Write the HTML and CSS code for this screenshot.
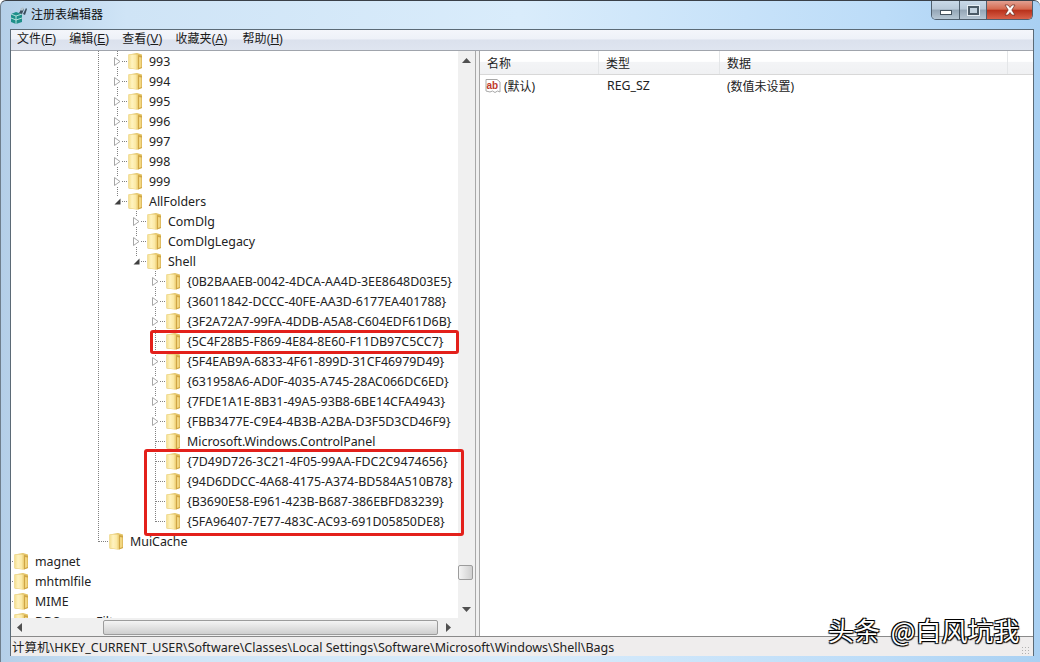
FILE: index.html
```html
<!DOCTYPE html>
<html lang="zh">
<head>
<meta charset="utf-8">
<title>注册表编辑器</title>
<link rel="stylesheet" href="styles.css">
</head>
<body>
<svg class="defs" width="0" height="0" aria-hidden="true">
  <defs>
    <linearGradient id="fg" x1="0" y1="0" x2="1" y2="0">
      <stop offset="0" stop-color="#f3dd8c"/><stop offset=".35" stop-color="#fff3c0"/><stop offset=".7" stop-color="#fbe9a6"/><stop offset="1" stop-color="#e6c566"/>
    </linearGradient>
    <symbol id="folder" viewBox="0 0 15 18">
      <path d="M.500 2.500 9 1l5 1.500v13.500l-5 1.500-8.500-1z" fill="#e3c468"/>
      <path d="M.500 2.500h9.500l.5 15-10-1.500z" fill="url(#fg)"/>
      <path d="M10 3l4 1v12l-4 1.500z" fill="#cfa544"/>
      <path d="M11 5l2.500.5v9.500l-2.500 1z" fill="#f2d680"/>
    </symbol>
    <symbol id="closed" viewBox="0 0 9 9">
      <path d="M1.500 .5 7 4.500 1.500 8.500z" fill="#fff" stroke="#a6a6a6"/>
    </symbol>
    <symbol id="open" viewBox="0 0 9 9">
      <path d="M7.500 1.500v6h-6z" fill="#404040"/>
    </symbol>
  </defs>
</svg>
<div class="window">
  <header class="titlebar">
    <svg class="app-icon" width="18" height="18" viewBox="0 0 18 18">
      <path d="M1 8l5-2 6 2v8l-6 2-5-2z" fill="#1f8f8a"/>
      <path d="M1 8l5 2v8M6 10l6-2M1 12l5 2 6-2" fill="none" stroke="#d6f2ee" stroke-width=".8"/>
      <path d="M9 7l3-5 2 1-2 5zM13 8l3-6 1 1-2 6z" fill="#3b4d5c"/>
      <path d="M10 3l3-2 1 2-2 2z" fill="#b7c7d2"/>
    </svg>
    <span class="title">注册表编辑器</span>
    <div class="caption">
      <div class="cap-btn cap-min"><i class="glyph-min"></i></div>
      <div class="cap-btn cap-max"><i class="glyph-max"></i></div>
      <div class="cap-btn cap-close"><svg width="14" height="12" viewBox="0 0 14 12"><path d="M2 1h3l2 2.500L9 1h3L8.800 6 12 11H9L7 8.500 5 11H2l3.200-5z" fill="#fff" stroke="#6b2b20" stroke-width=".7"/></svg></div>
    </div>
  </header>
  <div class="body">
    <nav class="menubar">
      <span>文件(<u>F</u>)</span><span>编辑(<u>E</u>)</span><span>查看(<u>V</u>)</span><span>收藏夹(<u>A</u>)</span><span>帮助(<u>H</u>)</span>
    </nav>
    <div class="panes">
      <section class="left">
        <div class="left-top">
          <div class="viewport">
            <div class="tree">
              <div class="row"><i class="s"></i><i class="s"></i><i class="s"></i><i class="s"></i><i class="s"></i><i class="s v"></i><i class="s t"><svg class="tri"><use href="#closed"/></svg></i><svg class="fld"><use href="#folder"/></svg><span class="lbl">993</span></div>
              <div class="row"><i class="s"></i><i class="s"></i><i class="s"></i><i class="s"></i><i class="s"></i><i class="s v"></i><i class="s t"><svg class="tri"><use href="#closed"/></svg></i><svg class="fld"><use href="#folder"/></svg><span class="lbl">994</span></div>
              <div class="row"><i class="s"></i><i class="s"></i><i class="s"></i><i class="s"></i><i class="s"></i><i class="s v"></i><i class="s t"><svg class="tri"><use href="#closed"/></svg></i><svg class="fld"><use href="#folder"/></svg><span class="lbl">995</span></div>
              <div class="row"><i class="s"></i><i class="s"></i><i class="s"></i><i class="s"></i><i class="s"></i><i class="s v"></i><i class="s t"><svg class="tri"><use href="#closed"/></svg></i><svg class="fld"><use href="#folder"/></svg><span class="lbl">996</span></div>
              <div class="row"><i class="s"></i><i class="s"></i><i class="s"></i><i class="s"></i><i class="s"></i><i class="s v"></i><i class="s t"><svg class="tri"><use href="#closed"/></svg></i><svg class="fld"><use href="#folder"/></svg><span class="lbl">997</span></div>
              <div class="row"><i class="s"></i><i class="s"></i><i class="s"></i><i class="s"></i><i class="s"></i><i class="s v"></i><i class="s t"><svg class="tri"><use href="#closed"/></svg></i><svg class="fld"><use href="#folder"/></svg><span class="lbl">998</span></div>
              <div class="row"><i class="s"></i><i class="s"></i><i class="s"></i><i class="s"></i><i class="s"></i><i class="s v"></i><i class="s t"><svg class="tri"><use href="#closed"/></svg></i><svg class="fld"><use href="#folder"/></svg><span class="lbl">999</span></div>
              <div class="row"><i class="s"></i><i class="s"></i><i class="s"></i><i class="s"></i><i class="s"></i><i class="s v"></i><i class="s c"><svg class="tri"><use href="#open"/></svg></i><svg class="fld"><use href="#folder"/></svg><span class="lbl">AllFolders</span></div>
              <div class="row"><i class="s"></i><i class="s"></i><i class="s"></i><i class="s"></i><i class="s"></i><i class="s v"></i><i class="s"></i><i class="s t"><svg class="tri"><use href="#closed"/></svg></i><svg class="fld"><use href="#folder"/></svg><span class="lbl">ComDlg</span></div>
              <div class="row"><i class="s"></i><i class="s"></i><i class="s"></i><i class="s"></i><i class="s"></i><i class="s v"></i><i class="s"></i><i class="s t"><svg class="tri"><use href="#closed"/></svg></i><svg class="fld"><use href="#folder"/></svg><span class="lbl">ComDlgLegacy</span></div>
              <div class="row"><i class="s"></i><i class="s"></i><i class="s"></i><i class="s"></i><i class="s"></i><i class="s v"></i><i class="s"></i><i class="s c"><svg class="tri"><use href="#open"/></svg></i><svg class="fld"><use href="#folder"/></svg><span class="lbl">Shell</span></div>
              <div class="row"><i class="s"></i><i class="s"></i><i class="s"></i><i class="s"></i><i class="s"></i><i class="s v"></i><i class="s"></i><i class="s"></i><i class="s t"><svg class="tri"><use href="#closed"/></svg></i><svg class="fld"><use href="#folder"/></svg><span class="lbl">{0B2BAAEB-0042-4DCA-AA4D-3EE8648D03E5}</span></div>
              <div class="row"><i class="s"></i><i class="s"></i><i class="s"></i><i class="s"></i><i class="s"></i><i class="s v"></i><i class="s"></i><i class="s"></i><i class="s t"><svg class="tri"><use href="#closed"/></svg></i><svg class="fld"><use href="#folder"/></svg><span class="lbl">{36011842-DCCC-40FE-AA3D-6177EA401788}</span></div>
              <div class="row"><i class="s"></i><i class="s"></i><i class="s"></i><i class="s"></i><i class="s"></i><i class="s v"></i><i class="s"></i><i class="s"></i><i class="s t"><svg class="tri"><use href="#closed"/></svg></i><svg class="fld"><use href="#folder"/></svg><span class="lbl">{3F2A72A7-99FA-4DDB-A5A8-C604EDF61D6B}</span></div>
              <div class="row"><i class="s"></i><i class="s"></i><i class="s"></i><i class="s"></i><i class="s"></i><i class="s v"></i><i class="s"></i><i class="s"></i><i class="s t"></i><svg class="fld"><use href="#folder"/></svg><span class="lbl">{5C4F28B5-F869-4E84-8E60-F11DB97C5CC7}</span></div>
              <div class="row"><i class="s"></i><i class="s"></i><i class="s"></i><i class="s"></i><i class="s"></i><i class="s v"></i><i class="s"></i><i class="s"></i><i class="s t"><svg class="tri"><use href="#closed"/></svg></i><svg class="fld"><use href="#folder"/></svg><span class="lbl">{5F4EAB9A-6833-4F61-899D-31CF46979D49}</span></div>
              <div class="row"><i class="s"></i><i class="s"></i><i class="s"></i><i class="s"></i><i class="s"></i><i class="s v"></i><i class="s"></i><i class="s"></i><i class="s t"><svg class="tri"><use href="#closed"/></svg></i><svg class="fld"><use href="#folder"/></svg><span class="lbl">{631958A6-AD0F-4035-A745-28AC066DC6ED}</span></div>
              <div class="row"><i class="s"></i><i class="s"></i><i class="s"></i><i class="s"></i><i class="s"></i><i class="s v"></i><i class="s"></i><i class="s"></i><i class="s t"><svg class="tri"><use href="#closed"/></svg></i><svg class="fld"><use href="#folder"/></svg><span class="lbl">{7FDE1A1E-8B31-49A5-93B8-6BE14CFA4943}</span></div>
              <div class="row"><i class="s"></i><i class="s"></i><i class="s"></i><i class="s"></i><i class="s"></i><i class="s v"></i><i class="s"></i><i class="s"></i><i class="s t"><svg class="tri"><use href="#closed"/></svg></i><svg class="fld"><use href="#folder"/></svg><span class="lbl">{FBB3477E-C9E4-4B3B-A2BA-D3F5D3CD46F9}</span></div>
              <div class="row"><i class="s"></i><i class="s"></i><i class="s"></i><i class="s"></i><i class="s"></i><i class="s v"></i><i class="s"></i><i class="s"></i><i class="s t"></i><svg class="fld"><use href="#folder"/></svg><span class="lbl">Microsoft.Windows.ControlPanel</span></div>
              <div class="row"><i class="s"></i><i class="s"></i><i class="s"></i><i class="s"></i><i class="s"></i><i class="s v"></i><i class="s"></i><i class="s"></i><i class="s t"></i><svg class="fld"><use href="#folder"/></svg><span class="lbl">{7D49D726-3C21-4F05-99AA-FDC2C9474656}</span></div>
              <div class="row"><i class="s"></i><i class="s"></i><i class="s"></i><i class="s"></i><i class="s"></i><i class="s v"></i><i class="s"></i><i class="s"></i><i class="s t"></i><svg class="fld"><use href="#folder"/></svg><span class="lbl">{94D6DDCC-4A68-4175-A374-BD584A510B78}</span></div>
              <div class="row"><i class="s"></i><i class="s"></i><i class="s"></i><i class="s"></i><i class="s"></i><i class="s v"></i><i class="s"></i><i class="s"></i><i class="s t"></i><svg class="fld"><use href="#folder"/></svg><span class="lbl">{B3690E58-E961-423B-B687-386EBFD83239}</span></div>
              <div class="row"><i class="s"></i><i class="s"></i><i class="s"></i><i class="s"></i><i class="s"></i><i class="s v"></i><i class="s"></i><i class="s"></i><i class="s c"></i><svg class="fld"><use href="#folder"/></svg><span class="lbl">{5FA96407-7E77-483C-AC93-691D05850DE8}</span></div>
              <div class="row"><i class="s"></i><i class="s"></i><i class="s"></i><i class="s"></i><i class="s"></i><i class="s c"></i><svg class="fld"><use href="#folder"/></svg><span class="lbl">MuiCache</span></div>
              <div class="row"><i class="s h"></i><svg class="fld"><use href="#folder"/></svg><span class="lbl">magnet</span></div>
              <div class="row"><i class="s h"></i><svg class="fld"><use href="#folder"/></svg><span class="lbl">mhtmlfile</span></div>
              <div class="row"><i class="s h"></i><svg class="fld"><use href="#folder"/></svg><span class="lbl">MIME</span></div>
              <div class="row"><i class="s h"></i><svg class="fld"><use href="#folder"/></svg><span class="lbl">DDSource Filter</span></div>
            </div>
          </div>
          <div class="vscroll">
            <svg class="arrow" width="9" height="5" viewBox="0 0 9 5"><path d="M4.500 0 9 5H0z" fill="#505050"/></svg>
            <div class="vtrack"><div class="vthumb"></div></div>
            <svg class="arrow" width="9" height="5" viewBox="0 0 9 5"><path d="M4.500 5 9 0H0z" fill="#505050"/></svg>
          </div>
        </div>
        <div class="hscroll">
          <svg width="5" height="9" viewBox="0 0 5 9"><path d="M0 4.500 5 0v9z" fill="#505050"/></svg>
          <div class="hthumb"></div>
          <svg width="5" height="9" viewBox="0 0 5 9"><path d="M5 4.500 0 0v9z" fill="#505050"/></svg>
        </div>
        <div class="mark mark-one"></div>
        <div class="mark mark-two"></div>
      </section>
      <section class="right">
        <div class="list-head">
          <span class="col col-a">名称</span><span class="col col-b">类型</span><span class="col col-c">数据</span><span class="col col-d"></span>
        </div>
        <div class="list-row">
          <span class="cell-a">
            <svg class="ab" width="16" height="16" viewBox="0 0 16 16"><path d="M1 1.500h11l3 2.500v10l-2.500-1-2.500 1.500-2.500-1.500-2.500 1L1 13z" fill="#fff" stroke="#a8a8a8"/><text x="1.500" y="10.500" class="ab-text">ab</text></svg>
            (默认)
          </span>
          <span class="cell-b">REG_SZ</span>
          <span class="cell-c">(数值未设置)</span>
        </div>
      </section>
    </div>
    <footer class="status"><span>计算机\HKEY_CURRENT_USER\Software\Classes\Local Settings\Software\Microsoft\Windows\Shell\Bags</span><i class="grip"></i></footer>
  </div>
  <div class="watermark">头条 @白风坑我</div>
</div>
</body>
</html>
```
FILE: styles.css
```css
* { box-sizing: border-box; }
html, body { margin: 0; padding: 0; }
body { width: 1040px; height: 662px; overflow: hidden; font-family: "Noto Sans", "Noto Sans CJK SC", sans-serif; }
.defs { display: block; height: 0; }
.window {
  position: relative;
  width: 1040px; height: 662px;
  padding: 0 6px 6px 9px;
  display: flex; flex-direction: column;
  background: linear-gradient(90deg, #b4cfe8 0, #cfe4f6 12%, #d9ecfb 50%, #bcdcf8 85%, #a9d0f2 100%);
  border-top: 1px solid #3a4048;
  border-left: 1px solid #6f7f8c;
  border-radius: 6px 6px 0 0;
}
.titlebar { height: 28px; flex: none; display: flex; align-items: flex-start; margin-left: -1px; margin-right: -5px; padding-right: 6px; }
.app-icon { margin: 5px 0 0 1px; flex: none; }
.title { margin: 3px 0 0 3px; font-family: "Noto Sans CJK SC", sans-serif; font-size: 12px; line-height: 20px; color: #101010; }
.caption { margin-left: auto; display: flex; height: 19px; border: 1px solid #4f5f6e; border-top: 0; border-radius: 0 0 5px 5px; overflow: hidden; }
.cap-btn { display: flex; align-items: center; justify-content: center; border-right: 1px solid #4f5f6e; }
.cap-btn:last-child { border-right: 0; }
.cap-min { width: 28px; background: linear-gradient(#c9d9e8 0, #b8c9d9 45%, #94a6b6 50%, #b6c6d4 100%); }
.cap-max { width: 27px; background: linear-gradient(#c9d9e8 0, #b8c9d9 45%, #94a6b6 50%, #b6c6d4 100%); }
.cap-close { width: 45px; background: linear-gradient(#e2a091 0, #d56a50 45%, #b9321c 52%, #d9614a 100%); }
.glyph-min { display: block; width: 12px; height: 5px; margin-top: 4px; background: #fff; border: 1px solid #44525e; }
.glyph-max { display: block; width: 11px; height: 9px; background: #c3d2df; border: 2px solid #4b5a66; outline: 1px solid #e6eef5; }
.body { flex: 1; min-height: 0; display: flex; flex-direction: column; border: 1px solid #5b6a76; border-bottom: 0; background: #f0f0f0; }
.menubar {
  height: 21px; flex: none; display: flex; gap: 13px; padding-left: 6px;
  font-family: "Liberation Sans", "Noto Sans CJK SC", sans-serif;
  font-size: 12px; line-height: 19px; color: #1a1a1a;
  background: linear-gradient(#f4f6fb 0, #eef1f8 45%, #dbe1ed 50%, #dfe5f0 100%);
  border-bottom: 1px solid #a0a4ac;
}
.menubar span { white-space: nowrap; }
.menubar span:last-child { margin-left: 2px; }
.panes { position: relative; flex: 1; min-height: 0; display: flex; gap: 3px; background: #f0f0f0; }
.left { position: relative; width: 465px; flex: none; display: flex; flex-direction: column; background: #fff; border-right: 1px solid #a8a8a8; }
.left-top { flex: 1; min-height: 0; display: flex; }
.viewport { flex: 1; min-width: 0; overflow: hidden; background: #fff; }
.tree { margin-left: -16px; }
.row { display: flex; align-items: center; height: 20px; white-space: nowrap; }
.s { position: relative; display: block; flex: none; width: 19px; height: 20px; }
.v { background: repeating-linear-gradient(#808080 0 1px, transparent 1px 2px) 8px 0 / 1px 100% no-repeat; }
.t {
  background:
    repeating-linear-gradient(#808080 0 1px, transparent 1px 2px) 8px 0 / 1px 100% no-repeat,
    repeating-linear-gradient(90deg, #808080 0 1px, transparent 1px 2px) 9px 10px / 10px 1px no-repeat;
}
.c {
  background:
    repeating-linear-gradient(#808080 0 1px, transparent 1px 2px) 8px 0 / 1px 11px no-repeat,
    repeating-linear-gradient(90deg, #808080 0 1px, transparent 1px 2px) 9px 10px / 10px 1px no-repeat;
}
.h { background: repeating-linear-gradient(90deg, #808080 0 1px, transparent 1px 2px) 9px 10px / 10px 1px no-repeat; }
.tri { position: absolute; left: 4px; top: 6px; width: 9px; height: 9px; background: #fff; }
.fld { flex: none; width: 15px; height: 18px; }
.lbl { margin-left: 6px; font-family: "Noto Sans", "Noto Sans CJK SC", sans-serif; font-size: 12.4px; color: #222; }
.mark { position: absolute; border: 3px solid #e3201b; border-radius: 3px; pointer-events: none; }
.mark-one { left: 139px; top: 279px; width: 309px; height: 24px; }
.mark-two { left: 133px; top: 398px; width: 320px; height: 87px; }
.vscroll { width: 17px; flex: none; display: flex; flex-direction: column; align-items: center; background: #f0f0f0; padding: 7px 0 6px; }
.vtrack { flex: 1; width: 100%; display: flex; flex-direction: column; justify-content: flex-end; align-items: flex-start; padding-bottom: 27px; }
.vthumb { height: 15px; width: 15px; border: 1px solid #9c9c9c; border-radius: 2px; background: linear-gradient(90deg, #f4f4f4, #cfcfcf); }
.hscroll { height: 18px; flex: none; display: flex; align-items: center; padding: 0 24px 0 6px; background: #f0f0f0; }
.hthumb { flex: 1; height: 15px; margin: 0 8px 0 81px; border: 1px solid #9c9c9c; border-radius: 2px; background: linear-gradient(#f4f4f4, #cfcfcf); }
.right { flex: 1; min-width: 0; background: #fff; border-left: 1px solid #a8a8a8; }
.list-head { height: 24px; display: flex; background: linear-gradient(#fff 0, #fff 45%, #f3f4f6 50%, #f0f1f3 100%); border-bottom: 1px solid #d8d8d8; font-family: "Noto Sans CJK SC", sans-serif; font-size: 12px; line-height: 24px; color: #222; }
.col { display: block; padding-left: 7px; border-right: 1px solid #e4e6e8; }
.col-a { width: 119px; }
.col-b { width: 121px; }
.col-c { width: 288px; }
.col-d { flex: 1; border-right: 0; }
.list-row { display: flex; height: 21px; align-items: center; font-size: 12px; color: #222; }
.cell-a { width: 127px; padding-left: 5px; display: flex; align-items: center; gap: 3px; }
.cell-b { width: 120px; font-size: 12.3px; }
.ab-text { font: bold 10px "Liberation Sans", sans-serif; fill: #c0392b; }
.status { height: 20px; flex: none; display: flex; align-items: center; justify-content: space-between; padding: 0 2px 0 1px; font-size: 12.5px; background: #efeded; border-top: 1px solid #8a8a8a; color: #222; white-space: nowrap; }
.grip { width: 10px; height: 10px; align-self: flex-end; background: radial-gradient(#b0b0b0 40%, transparent 45%) 0 0 / 3px 3px; }
.watermark { position: absolute; left: 827px; top: 612px; font-family: "Noto Sans CJK SC", sans-serif; font-size: 26px; line-height: 34px; word-spacing: 5px; color: #fff; white-space: nowrap; text-shadow: 1px 1px 1px #000, -1px 1px 1px #000, 1px -1px 0 #000, -1px -1px 0 #000; }
```
